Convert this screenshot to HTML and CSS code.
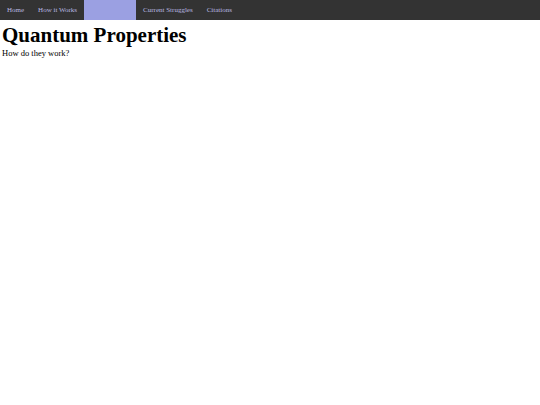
FILE: index.html
```html
<!DOCTYPE html>
<html>
<head>
<meta charset="utf-8">
<link rel="stylesheet" href="styles.css">
</head>
<body>
<nav class="topnav">
  <a class="nav-link" href="#">Home</a>
  <a class="nav-link" href="#">How it Works</a>
  <span class="nav-link active"></span>
  <a class="nav-link" href="#">Current Struggles</a>
  <a class="nav-link" href="#">Citations</a>
</nav>
<main class="content">
  <h1 class="title">Quantum Properties</h1>
  <p class="subtitle">How do they work?</p>
</main>
</body>
</html>
```
FILE: styles.css
```css
html, body {
  margin: 0;
  padding: 0;
  background: #ffffff;
  font-family: "Liberation Serif", "Times New Roman", serif;
}
.topnav {
  display: flex;
  height: 20px;
  background: #333333;
}
.nav-link {
  display: block;
  padding: 0 7px;
  line-height: 20px;
  font-size: 7px;
  color: #b8b8e0;
  text-decoration: none;
}
.active {
  width: 38px;
  background: #9ba0e2;
}
.content {
  padding: 0 2px;
}
.title {
  margin: 3px 0 1px;
  font-size: 21px;
  font-weight: bold;
  line-height: 24px;
  color: #000;
}
.subtitle {
  margin: 0;
  font-size: 8.5px;
  line-height: 10px;
  color: #000;
}
```
